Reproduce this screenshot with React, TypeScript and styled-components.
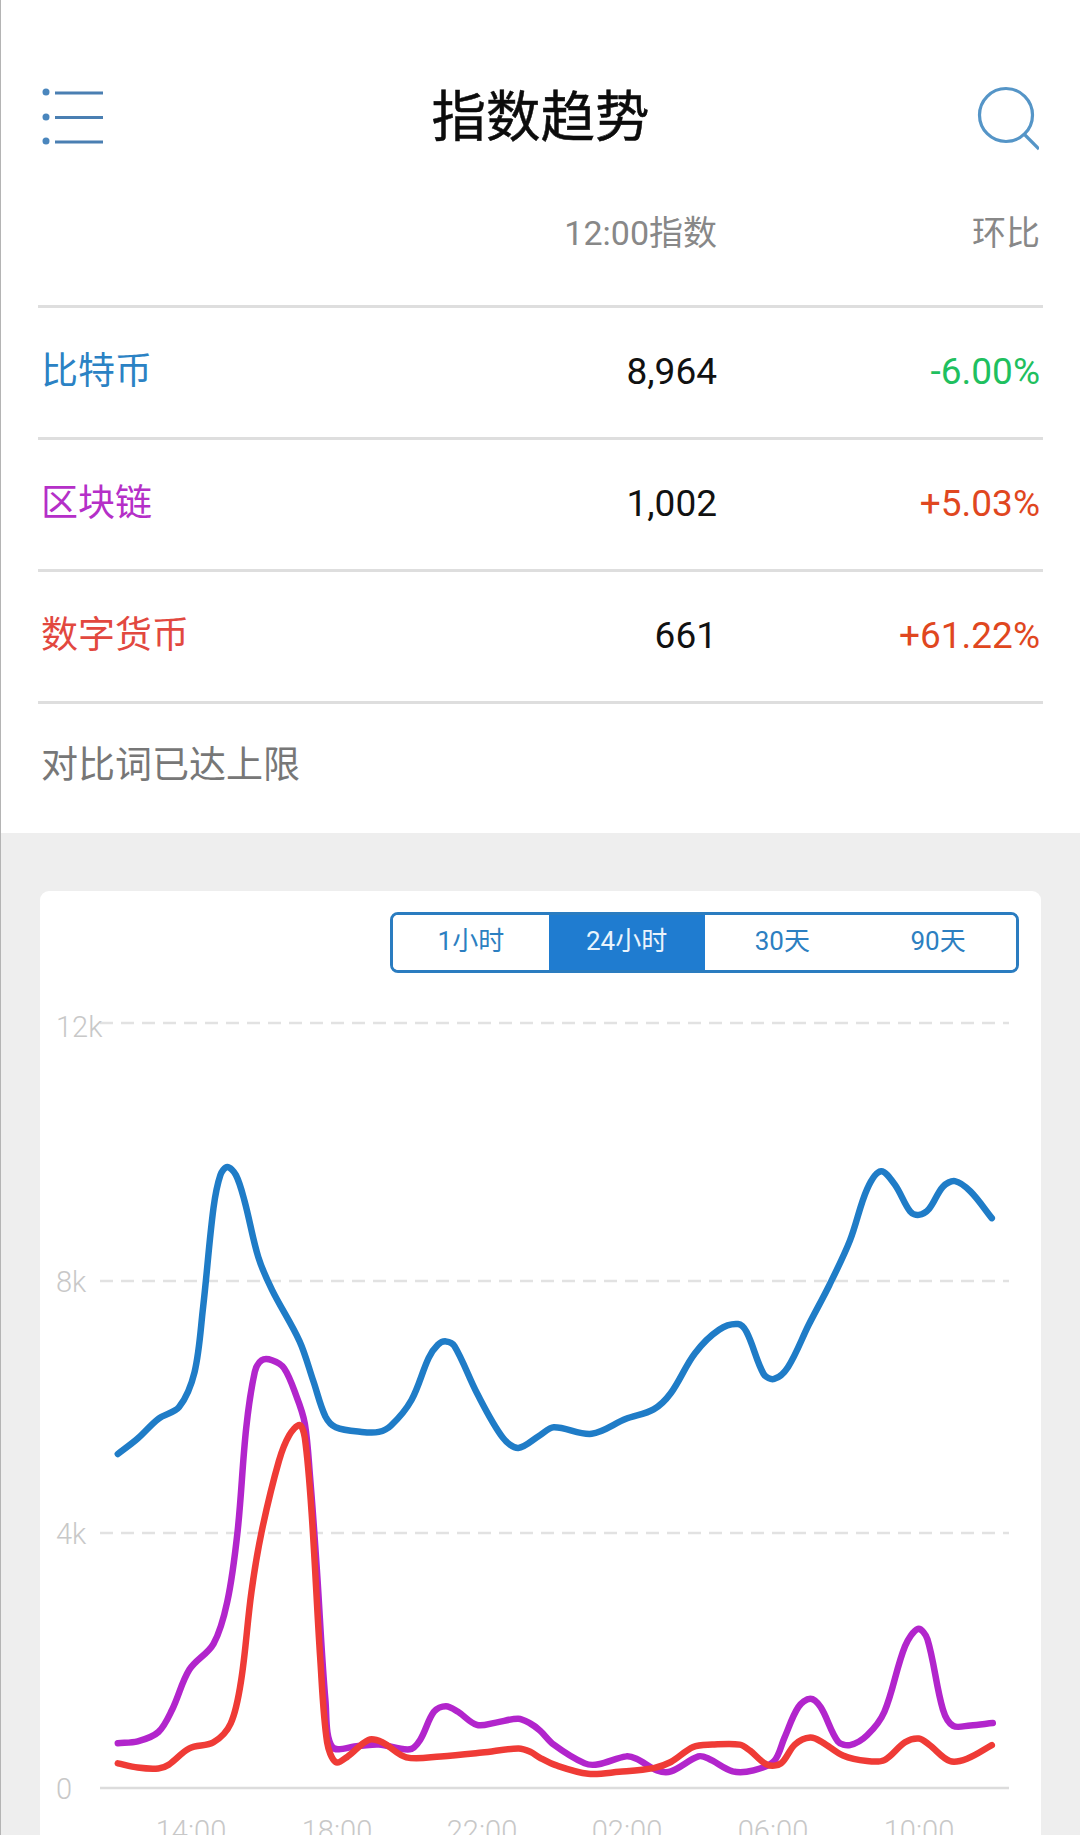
import React from "react";
import styled, { createGlobalStyle } from "styled-components";

const Global = createGlobalStyle`
  html, body { margin: 0; padding: 0; background: #fff; }
  body { font-family: Roboto, "Noto Sans CJK SC", sans-serif; }
`;

const Page = styled.div`
  width: 1080px;
  height: 1835px;
  overflow: hidden;
  display: flex;
  flex-direction: column;
  border-left: 1px solid #b4b4b4;
  box-sizing: border-box;
`;

const Top = styled.section`
  height: 833px;
  flex: none;
  background: #fff;
  padding: 0 37px;
  box-sizing: border-box;
`;

const Header = styled.header`
  height: 190px;
  padding: 44px 0 0 4px;
  box-sizing: border-box;
  display: flex;
  align-items: center;
  justify-content: space-between;
`;

const IconSlot = styled.svg<{ $inset?: number }>`
  flex: none;
  display: block;
  margin-right: ${(p) => p.$inset ?? 0}px;
`;

const Title = styled.h1`
  margin: 0;
  font: 400 54.5px/1 Roboto, "Noto Sans CJK SC", sans-serif;
  color: #0c0c0c;
  -webkit-text-stroke: 0.5px #0c0c0c;
`;

const Row = styled.div<{ $head?: boolean }>`
  display: grid;
  grid-template-columns: 1fr 300px 323px;
  align-items: center;
  height: ${(p) => (p.$head ? "118px" : "132px")};
  box-sizing: border-box;
  padding: ${(p) => (p.$head ? "0 3px 30px 3px" : "0 3px 2px")};
  border-bottom: 3px solid #dedede;
  line-height: 1;
`;

const HeadCell = styled.div<{ $col: number }>`
  grid-column: ${(p) => p.$col};
  text-align: right;
  font-size: 34px;
  color: #888;
`;

const Name = styled.div<{ $color: string }>`
  color: ${(p) => p.$color};
  font-size: 37px;
`;

const Value = styled.div`
  text-align: right;
  color: #111;
  font-size: 37px;
`;

const Change = styled.div<{ $color: string }>`
  text-align: right;
  color: ${(p) => p.$color};
  font-size: 37px;
`;

const Limit = styled.div`
  padding: 42px 0 0 3px;
  font-size: 37px;
  line-height: 1.1;
  color: #777;
`;

const Bottom = styled.section`
  flex: 1;
  background: #eee;
  padding: 58px 39px 0;
  box-sizing: border-box;
`;

const Card = styled.div`
  background: #fff;
  border-radius: 9px 9px 0 0;
  padding-top: 21px;
  height: 1000px;
`;

const Segments = styled.div`
  width: 629px;
  height: 61px;
  margin: 0 22px 0 auto;
  box-sizing: border-box;
  border: 3px solid #2a7cc0;
  border-radius: 8px;
  display: grid;
  grid-template-columns: repeat(4, 1fr);
  overflow: hidden;
`;

const Segment = styled.div<{ $active?: boolean }>`
  display: flex;
  align-items: center;
  justify-content: center;
  padding-bottom: 8px;
  box-sizing: border-box;
  font-size: 26px;
  color: ${(p) => (p.$active ? "#eaf4fc" : "#2c7fc1")};
  background: ${(p) => (p.$active ? "#1f7cd0" : "#fff")};
`;

const Chart = styled.svg`
  display: block;
  margin-top: 27px;
`;

const AxisText = styled.text`
  font-family: Roboto, sans-serif;
  font-weight: 300;
  font-size: 29px;
  fill: #c8c8c8;
`;

type P = [number, number];

// Traced points: left half and right half of the plot, page coordinates.
const L = (x: number, y: number): P => [x / 2.904, 1100 + y / 2.133];
const R = (x: number, y: number): P => [540 + x / 2.904, 1100 + y / 2.133];

const toL = (a: number[][]) => a.map(([x, y]) => L(x, y));
const toR = (a: number[][]) => a.map(([x, y]) => R(x, y));

const blue: P[] = [
  ...toL([[342,755],[400,722],[460,680],[520,655],[565,580],[590,440],[620,230],[640,160],[660,143],[685,160],[710,215],[750,335],[790,405],[870,515],[910,600],[945,675],[975,698],[1050,708],[1100,708],[1135,695],[1195,640],[1245,550],[1272,522],[1295,515],[1320,525],[1385,625],[1460,720],[1505,742]]),
  ...toR([[0,715],[40,698],[150,712],[250,680],[330,660],[380,625],[450,540],[520,490],[575,478],[600,495],[650,585],[680,595],[720,570],[780,480],[840,395],[900,300],[950,190],[990,152],[1030,180],[1075,238],[1100,245],[1130,232],[1170,185],[1205,173],[1250,195],[1312,252]]),
];

const purple: P[] = [
  ...toL([[342,1372],[400,1368],[460,1348],[500,1300],[550,1215],[620,1160],[660,1070],[690,920],[715,700],[740,580],[760,555],[790,555],[825,572],[860,630],[885,690],[900,800],[920,1000],[945,1280],[965,1380],[1040,1378],[1100,1375],[1190,1385],[1220,1365],[1260,1305],[1295,1293],[1330,1305],[1385,1333],[1440,1328],[1505,1320],[1540,1330]]),
  ...toR([[0,1345],[40,1375],[130,1415],[170,1417],[250,1400],[280,1405],[340,1430],[380,1432],[460,1400],[490,1405],[560,1432],[620,1430],[680,1410],[710,1360],[750,1295],[785,1277],[815,1295],[865,1368],[900,1376],[950,1355],[1000,1305],[1060,1165],[1098,1128],[1125,1150],[1170,1300],[1200,1335],[1250,1334],[1315,1329]]),
];

const red: P[] = [
  ...toL([[342,1415],[400,1424],[460,1426],[490,1418],[550,1383],[620,1370],[670,1330],[700,1240],[730,1050],[760,920],[810,770],[840,715],[870,693],[885,720],[905,880],[930,1190],[950,1370],[975,1412],[1010,1400],[1070,1365],[1110,1370],[1180,1402],[1280,1400],[1400,1392],[1505,1383],[1540,1390]]),
  ...toR([[0,1403],[50,1420],[140,1437],[230,1433],[330,1425],[380,1412],[445,1380],[500,1375],[580,1375],[610,1388],[660,1418],[700,1415],[740,1375],[785,1360],[820,1370],[880,1398],[950,1410],[1000,1408],[1060,1370],[1100,1362],[1130,1375],[1190,1410],[1240,1405],[1312,1376]]),
];

const dist = (a: P, b: P) => Math.hypot(a[0] - b[0], a[1] - b[1]) || 1;

// Chord-length Catmull-Rom: keeps unevenly spaced traced points free of kinks.
function smooth(pts: P[]): string {
  const tangent = (i: number): P => {
    const a = pts[Math.max(i - 1, 0)];
    const b = pts[Math.min(i + 1, pts.length - 1)];
    const span = dist(a, pts[i]) + dist(pts[i], b);
    return [(b[0] - a[0]) / span, (b[1] - a[1]) / span];
  };
  let d = `M${pts[0][0].toFixed(1)} ${pts[0][1].toFixed(1)}`;
  for (let i = 0; i < pts.length - 1; i++) {
    const p1 = pts[i];
    const p2 = pts[i + 1];
    const len = dist(p1, p2) / 3;
    const m1 = tangent(i);
    const m2 = tangent(i + 1);
    d += `C${(p1[0] + m1[0] * len).toFixed(1)} ${(p1[1] + m1[1] * len).toFixed(1)} ${(p2[0] - m2[0] * len).toFixed(1)} ${(p2[1] - m2[1] * len).toFixed(1)} ${p2[0].toFixed(1)} ${p2[1].toFixed(1)}`;
  }
  return d;
}

const rows = [
  { name: "比特币", color: "#2b82c4", value: "8,964", change: "-6.00%", changeColor: "#1fc05f" },
  { name: "区块链", color: "#b52fc8", value: "1,002", change: "+5.03%", changeColor: "#e0471f" },
  { name: "数字货币", color: "#e2483f", value: "661", change: "+61.22%", changeColor: "#e0471f" },
];

const grid = [
  { label: "12k", y: 1023, ty: 1037 },
  { label: "8k", y: 1281, ty: 1292 },
  { label: "4k", y: 1533, ty: 1544 },
];

const ticks = [
  { label: "14:00", x: 191 },
  { label: "18:00", x: 337 },
  { label: "22:00", x: 482 },
  { label: "02:00", x: 627 },
  { label: "06:00", x: 773 },
  { label: "10:00", x: 919 },
];

export default function App() {
  return (
    <>
      <Global />
      <Page>
        <Top>
          <Header>
            <IconSlot width="70" height="70" viewBox="0 0 70 70">
              <g fill="#4a86bd">
                <circle cx="4" cy="10" r="3.5" />
                <circle cx="4" cy="35" r="3.5" />
                <circle cx="4" cy="59" r="3.5" />
              </g>
              <g stroke="#4a7fb2" strokeWidth="3">
                <line x1="13" y1="11" x2="61" y2="11" />
                <line x1="13" y1="35.5" x2="61" y2="35.5" />
                <line x1="13" y1="60" x2="61" y2="60" />
              </g>
            </IconSlot>
            <Title>指数趋势</Title>
            <IconSlot width="70" height="70" viewBox="0 0 70 70" $inset={4}>
              <circle cx="37" cy="33" r="26.5" fill="none" stroke="#5595c7" strokeWidth="3.2" />
              <line x1="55" y1="52" x2="70" y2="67" stroke="#5595c7" strokeWidth="3.2" />
            </IconSlot>
          </Header>
          <Row $head>
            <HeadCell $col={2}>12:00指数</HeadCell>
            <HeadCell $col={3}>环比</HeadCell>
          </Row>
          {rows.map((r) => (
            <Row key={r.name}>
              <Name $color={r.color}>{r.name}</Name>
              <Value>{r.value}</Value>
              <Change $color={r.changeColor}>{r.change}</Change>
            </Row>
          ))}
          <Limit>对比词已达上限</Limit>
        </Top>
        <Bottom>
          <Card>
            <Segments>
              <Segment>1小时</Segment>
              <Segment $active>24小时</Segment>
              <Segment>30天</Segment>
              <Segment>90天</Segment>
            </Segments>
            <Chart width="1000" height="860" viewBox="40 1000 1000 860">
              {grid.map((g) => (
                <g key={g.label}>
                  <line x1="100" y1={g.y} x2="1009" y2={g.y} stroke="#e2e2e2" strokeWidth="2.4" strokeDasharray="13 8" />
                  <AxisText x="56" y={g.ty}>{g.label}</AxisText>
                </g>
              ))}
              <AxisText x="56" y="1799">0</AxisText>
              <line x1="100" y1="1788" x2="1009" y2="1788" stroke="#dcdcdc" strokeWidth="2.4" />
              {ticks.map((t) => (
                <AxisText key={t.label} x={t.x} y="1841" textAnchor="middle">{t.label}</AxisText>
              ))}
              <path d={smooth(blue)} fill="none" stroke="#1f7cc7" strokeWidth="6.5" strokeLinecap="round" strokeLinejoin="round" />
              <path d={smooth(purple)} fill="none" stroke="#b225cc" strokeWidth="6.5" strokeLinecap="round" strokeLinejoin="round" />
              <path d={smooth(red)} fill="none" stroke="#ef3b36" strokeWidth="6.5" strokeLinecap="round" strokeLinejoin="round" />
            </Chart>
          </Card>
        </Bottom>
      </Page>
    </>
  );
}
